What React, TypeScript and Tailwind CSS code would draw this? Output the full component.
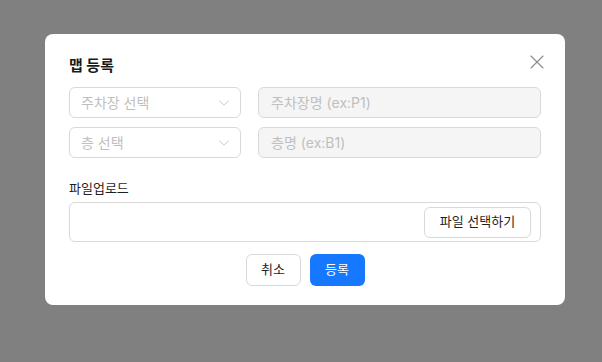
import { X, ChevronDown } from "lucide-react";

const font = { fontFamily: 'Inter, "Noto Sans CJK KR", "Noto Sans", sans-serif' };

function SelectBox({ placeholder }: { placeholder: string }) {
  return (
    <div className="flex h-[31px] w-[172px] items-center justify-between rounded-md border border-[#d9d9d9] bg-white pl-[11px] pr-[7px]">
      <span className="text-[14px] text-[#bfbfbf]">{placeholder}</span>
      <ChevronDown size={18} strokeWidth={1.1} className="text-[#bfbfbf]" />
    </div>
  );
}

function DisabledInput({ placeholder }: { placeholder: string }) {
  return (
    <div className="flex h-[31px] flex-1 items-center rounded-md border border-[#d9d9d9] bg-[#f5f5f5] px-[12px]">
      <span className="text-[14px] text-[#bfbfbf]">{placeholder}</span>
    </div>
  );
}

export default function App() {
  return (
    <div className="h-[362px] w-[602px] bg-[#808080] pl-[45px] pt-[34px]" style={font}>
      <div className="relative w-[520px] rounded-lg bg-white px-6 pb-[19px] pt-[21px]">
        <button className="absolute right-[16px] top-[16px] text-[#8c8c8c]">
          <X size={24} strokeWidth={1.1} />
        </button>

        <h2 className="mb-[10px] h-[22px] text-[15px] font-bold leading-[22px] text-[#1a1a1a]">맵 등록</h2>

        <div className="flex gap-[17px]">
          <SelectBox placeholder="주차장 선택" />
          <DisabledInput placeholder="주차장명 (ex:P1)" />
        </div>
        <div className="mt-[9px] flex gap-[17px]">
          <SelectBox placeholder="층 선택" />
          <DisabledInput placeholder="층명 (ex:B1)" />
        </div>

        <div className="mt-[20px] h-5 text-[13px] leading-5 text-[#1f1f1f]">파일업로드</div>
        <div className="mt-[4px] flex h-[40px] items-center justify-end rounded-md border border-[#d9d9d9] pr-[9px]">
          <button className="h-[31px] w-[107px] rounded-md border border-[#d9d9d9] bg-white text-[13px] text-[#1f1f1f]">
            파일 선택하기
          </button>
        </div>

        <div className="mt-[12px] flex justify-center gap-[9px]">
          <button className="h-[32px] w-[55px] rounded-md border border-[#d9d9d9] bg-white text-[13px] text-[#1f1f1f]">
            취소
          </button>
          <button className="h-[32px] w-[55px] rounded-md bg-[#1677ff] text-[13px] text-white">
            등록
          </button>
        </div>
      </div>
    </div>
  );
}
